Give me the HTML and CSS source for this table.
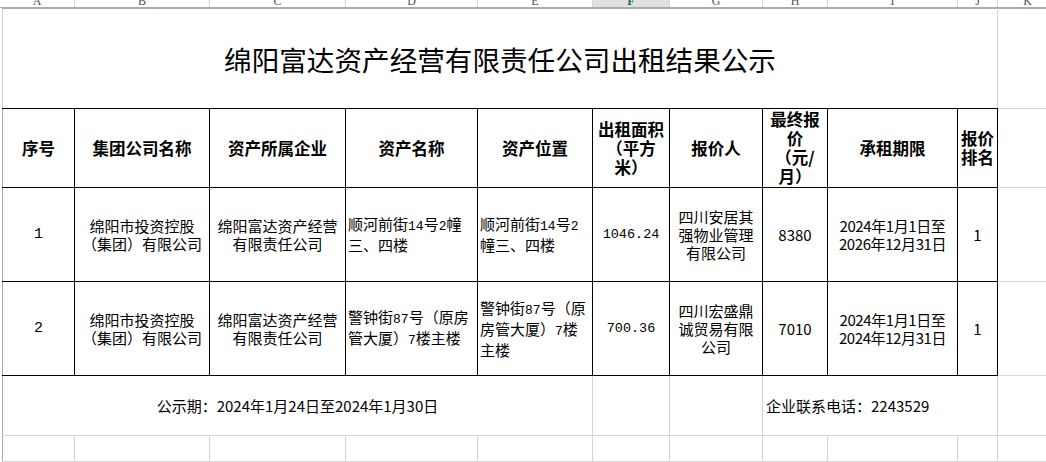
FILE: index.html
```html
<!DOCTYPE html>
<html lang="zh-CN">
<head>
<meta charset="utf-8">
<title>出租结果公示</title>
<link rel="stylesheet" href="styles.css">
</head>
<body>
<div class="colbar">
  <span class="ch ch-a">A</span>
  <span class="ch ch-b">B</span>
  <span class="ch ch-c">C</span>
  <span class="ch ch-d">D</span>
  <span class="ch ch-e">E</span>
  <span class="ch ch-f sel">F</span>
  <span class="ch ch-g">G</span>
  <span class="ch ch-h">H</span>
  <span class="ch ch-i">I</span>
  <span class="ch ch-j">J</span>
  <span class="ch ch-k">K</span>
</div>
<table class="sheet">
  <colgroup>
    <col class="c-a"><col class="c-b"><col class="c-c"><col class="c-d"><col class="c-e">
    <col class="c-f"><col class="c-g"><col class="c-h"><col class="c-i"><col class="c-j"><col class="c-k">
  </colgroup>
  <tr class="r-title">
    <td colspan="10" class="title">绵阳富达资产经营有限责任公司出租结果公示</td>
    <td class="k"></td>
  </tr>
  <tr class="r-head">
    <th class="first">序号</th>
    <th>集团公司名称</th>
    <th>资产所属企业</th>
    <th>资产名称</th>
    <th>资产位置</th>
    <th>出租面积<br>（平方<br>米）</th>
    <th>报价人</th>
    <th>最终报<br>价<br>（元/<br>月）</th>
    <th>承租期限</th>
    <th>报价<br>排名</th>
    <td class="k"></td>
  </tr>
  <tr class="r-data">
    <td class="b first mono">1</td>
    <td class="b">绵阳市投资控股<br>（集团）有限公司</td>
    <td class="b">绵阳富达资产经营<br>有限责任公司</td>
    <td class="b left">顺河前街<span class="n">14</span>号<span class="n">2</span>幢<br>三、四楼</td>
    <td class="b left">顺河前街<span class="n">14</span>号<span class="n">2</span><br>幢三、四楼</td>
    <td class="b mono num">1046.24</td>
    <td class="b">四川安居其<br>强物业管理<br>有限公司</td>
    <td class="b">8380</td>
    <td class="b term">2024年1月1日至<br>2026年12月31日</td>
    <td class="b">1</td>
    <td class="k"></td>
  </tr>
  <tr class="r-data">
    <td class="b first mono">2</td>
    <td class="b">绵阳市投资控股<br>（集团）有限公司</td>
    <td class="b">绵阳富达资产经营<br>有限责任公司</td>
    <td class="b left">警钟街<span class="n">87</span>号（原房<br>管大厦）<span class="n">7</span>楼主楼</td>
    <td class="b left">警钟街<span class="n">87</span>号（原<br>房管大厦）<span class="n">7</span>楼<br>主楼</td>
    <td class="b mono num">700.36</td>
    <td class="b">四川宏盛鼎<br>诚贸易有限<br>公司</td>
    <td class="b">7010</td>
    <td class="b term">2024年1月1日至<br>2024年12月31日</td>
    <td class="b">1</td>
    <td class="k"></td>
  </tr>
  <tr class="r-foot">
    <td colspan="5" class="first foot">公示期：2024年1月24日至2024年1月30日</td>
    <td></td>
    <td></td>
    <td colspan="3" class="foot left">企业联系电话：2243529</td>
    <td class="k"></td>
  </tr>
  <tr class="r-empty">
    <td class="first"></td><td></td><td></td><td></td><td></td><td></td><td></td><td></td><td></td><td></td><td class="k"></td>
  </tr>
  <tr class="r-empty">
    <td class="first"></td><td></td><td></td><td></td><td></td><td></td><td></td><td></td><td></td><td></td><td class="k"></td>
  </tr>
</table>
</body>
</html>
```

FILE: styles.css
```css
html, body {
  margin: 0;
  padding: 0;
  overflow: hidden;
  background: #ffffff;
}

body {
  font-family: "Noto Sans CJK SC", "Noto Sans", sans-serif;
  color: #000;
}

/* column letter bar */
.colbar {
  display: flex;
  height: 7px;
  border-bottom: 1px solid #ababab;
  overflow: hidden;
  background: #ffffff;
}

.ch {
  flex: none;
  align-self: flex-start;
  box-sizing: border-box;
  height: 16px;
  margin-top: -6px;
  border-right: 1px solid #d4d4d4;
  text-align: center;
  font-family: "Liberation Serif", serif;
  font-size: 12px;
  line-height: 14px;
  color: #505050;
}

.ch-a { width: 75px; }
.ch-b { width: 135px; }
.ch-c { width: 136px; }
.ch-d { width: 132px; }
.ch-e { width: 115px; }
.ch-f { width: 77px; }
.ch-g { width: 93px; }
.ch-h { width: 65px; }
.ch-i { width: 130px; }
.ch-j { width: 40px; }
.ch-k { width: 60px; }

.ch.sel {
  background: #e1e1e1;
  color: #217346;
  font-weight: bold;
  box-shadow: inset 0 -8px 0 -6px #217346;
}

/* sheet grid */
.sheet {
  margin-left: 2px;
  border-collapse: collapse;
  table-layout: fixed;
  width: 1055px;
}

.c-a { width: 72px; }
.c-b { width: 135px; }
.c-c { width: 136px; }
.c-d { width: 132px; }
.c-e { width: 115px; }
.c-f { width: 77px; }
.c-g { width: 93px; }
.c-h { width: 65px; }
.c-i { width: 130px; }
.c-j { width: 40px; }
.c-k { width: 60px; }

.sheet td,
.sheet th {
  border: 1px solid #d4d4d4;
  padding: 0 2px;
  text-align: center;
  vertical-align: middle;
  font-size: 15px;
  line-height: 18px;
  font-weight: normal;
  overflow: hidden;
  white-space: nowrap;
}

.sheet .first {
  border-left-color: #ababab;
}

.r-title td {
  height: 99px;
}

.sheet .title {
  border-top-color: #ababab;
  border-bottom-color: #000;
  font-size: 27.6px;
  line-height: 34px;
}

.r-title .k {
  border-top-color: #ababab;
}

.r-head td,
.r-head th {
  height: 78px;
}

.sheet th {
  border-color: #000;
  font-weight: bold;
  font-size: 16.5px;
  line-height: 19px;
  padding: 0 1px;
}

.sheet th.first {
  border-left-color: #ababab;
}

.r-data td {
  height: 93px;
}

.sheet td.b {
  border-color: #000;
}

.sheet td.b.first {
  border-left-color: #ababab;
}

.sheet .left {
  text-align: left;
  padding-left: 2px;
}

.mono {
  font-family: "Liberation Mono", "Noto Sans CJK SC", monospace;
}

.sheet .num {
  font-size: 13.5px;
}

.n {
  font-family: "Liberation Mono", monospace;
  font-size: 13px;
}

.sheet .term {
  font-size: 15px;
  letter-spacing: -0.4px;
}

.r-foot td {
  height: 59px;
}

.sheet .foot {
  font-size: 15px;
}

.r-foot .foot.left {
  padding-left: 3px;
}

.r-empty td {
  height: 25px;
}
```
